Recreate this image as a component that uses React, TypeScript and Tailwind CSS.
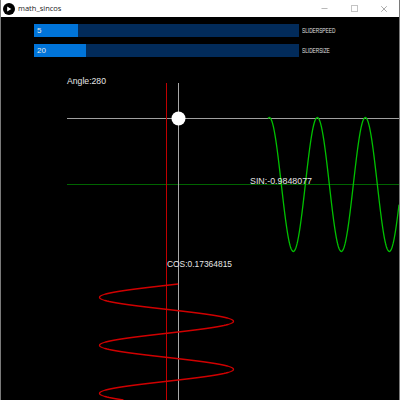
import { X, Minus } from "lucide-react";

const ANGLE = 280;
const STEP = 7.5; // degrees of phase per pixel
const DEG = Math.PI / 180;

// sine trace runs to the right, starting at the dot's height
function sinePath() {
  const pts: string[] = [];
  for (let x = 268; x <= 399; x += 0.5) {
    const a = (ANGLE - (x - 268) * STEP) * DEG;
    pts.push(`${x},${(184.5 + 67 * Math.sin(a)).toFixed(2)}`);
  }
  return "M" + pts.join("L");
}

// cosine trace runs downwards, centred on the red axis
function cosinePath() {
  const pts: string[] = [];
  for (let y = 284; y <= 400; y += 0.5) {
    const a = (ANGLE - (y - 284) * STEP) * DEG;
    pts.push(`${(166.5 + 67 * Math.cos(a)).toFixed(2)},${y}`);
  }
  return "M" + pts.join("L");
}

const sliders = [
  { label: "SLIDERSPEED", value: "5", fill: 44 },
  { label: "SLIDERSIZE", value: "20", fill: 52 },
];

function Slider({ label, value, fill }: { label: string; value: string; fill: number }) {
  return (
    <div className="flex items-center h-[13px]">
      <div className="relative flex h-full w-[265px] bg-[#022b5a]">
        <div className="h-full bg-[#0074d9]" style={{ width: fill }} />
        <span className="absolute left-[3px] top-[2px] text-[8px] leading-[9px] text-[#e8e8e8] font-['Liberation_Sans',sans-serif]">
          {value}
        </span>
      </div>
      <span className="ml-[3px] inline-block origin-left scale-x-[0.68] text-[7px] leading-[7px] text-[#e0e0e0] font-['Liberation_Sans',sans-serif]">
        {label}
      </span>
    </div>
  );
}

export default function App() {
  const font = "Liberation Sans, sans-serif";
  return (
    <div className="w-[400px] h-[400px] flex flex-col bg-black border-x border-[#7a7a7a] overflow-hidden">
      {/* title bar */}
      <div className="flex items-center h-[17px] bg-white shrink-0">
        <div className="ml-[2px] w-[12px] h-[12px] rounded-full bg-black flex items-center justify-center">
          <svg width="6" height="6" viewBox="0 0 6 6">
            <path d="M1.2 0.5 L5.3 3 L1.2 5.5 Z" fill="#fff" />
          </svg>
        </div>
        <span className="ml-[3px] text-[7.5px] text-[#222] font-['Open_Sans',sans-serif]">math_sincos</span>
        <div className="ml-auto flex h-full">
          <div className="w-[30px] flex items-center justify-center">
            <Minus size={9} strokeWidth={1} color="#444" />
          </div>
          <div className="w-[30px] flex items-center justify-center">
            <div className="w-[7px] h-[7px] border border-[#c4c4c4]" />
          </div>
          <div className="w-[30px] flex items-center justify-center">
            <X size={10} strokeWidth={1} color="#333" />
          </div>
        </div>
      </div>

      {/* sketch canvas */}
      <div className="flex flex-col flex-1 bg-black">
        <div className="flex flex-col gap-[7px] pt-[7px] pl-[33px]">
          {sliders.map((s) => (
            <Slider key={s.label} {...s} />
          ))}
        </div>
        <svg width="398" height="343" viewBox="1 57 398 343" className="block">
          <text x="67" y="84" fontFamily={font} fontSize="9.5" fill="#e6e6e6" textLength="39" lengthAdjust="spacingAndGlyphs">
            Angle:280
          </text>
          <line x1="67" y1="118.5" x2="399" y2="118.5" stroke="#a0a0a0" strokeWidth="1" />
          <line x1="67" y1="184.5" x2="399" y2="184.5" stroke="#006400" strokeWidth="1" />
          <line x1="166.5" y1="83" x2="166.5" y2="400" stroke="#c00000" strokeWidth="1" />
          <line x1="178.5" y1="83" x2="178.5" y2="400" stroke="#a8a8a8" strokeWidth="1" />
          <path d={sinePath()} fill="none" stroke="#00c000" strokeWidth="1.3" />
          <path d={cosinePath()} fill="none" stroke="#d00000" strokeWidth="1.3" />
          <circle cx="178.5" cy="118.5" r="7" fill="#fff" />
          <text x="250" y="183.5" fontFamily={font} fontSize="9" fill="#e6e6e6" textLength="62" lengthAdjust="spacingAndGlyphs">
            SIN:-0.9848077
          </text>
          <text x="167" y="267" fontFamily={font} fontSize="9" fill="#e6e6e6" textLength="65" lengthAdjust="spacingAndGlyphs">
            COS:0.17364815
          </text>
        </svg>
      </div>
    </div>
  );
}
